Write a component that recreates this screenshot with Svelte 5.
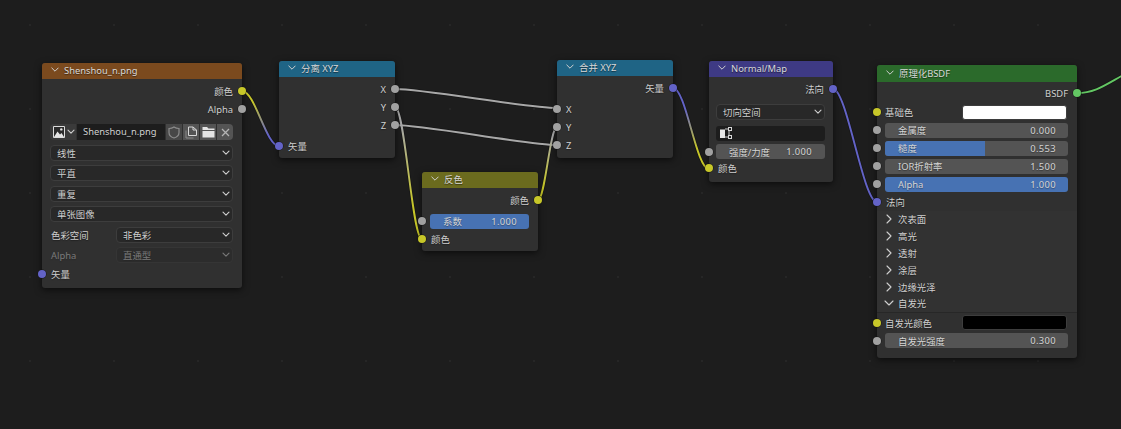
<script>
	const wires = [
		{ id: 'w1', color: 'url(#w1v)', d: 'M242 91 C255 91 266 146 279 146' },
		{ id: 'w2', color: '#a8a8a8', d: 'M395 89 C425 89 527 108 557 108' },
		{ id: 'w3', color: '#a8a8a8', d: 'M395 125 C425 125 527 145 557 145' },
		{ id: 'w4', color: 'url(#w4v)', d: 'M395 107 C405 107 412 239 422 239' },
		{ id: 'w5', color: 'url(#w5v)', d: 'M538 200 C545 200 550 127 557 127' },
		{ id: 'w6', color: 'url(#w6v)', d: 'M673 88 C686 88 696 169 709 169' },
		{ id: 'w7', color: '#6363c7', d: 'M833 89 C847 89 863 202 877 202' },
		{ id: 'w8', color: '#63c763', d: 'M1077 93 C1095 93 1105 85 1125 74' }
	];

	const panels = ['次表面', '高光', '透射', '涂层', '边缘光泽'];
</script>

{#snippet chevron()}
	<svg class="chev" width="8" height="6" viewBox="0 0 8 6"><path d="M1 1.2 L4 4.2 L7 1.2" fill="none" stroke="currentColor" stroke-width="1.1" stroke-linecap="round" stroke-linejoin="round" /></svg>
{/snippet}

{#snippet header(title)}
	<div class="head">
		<svg class="hchev" width="8" height="6" viewBox="0 0 8 6"><path d="M.8 1 L4 4.2 L7.200 1" fill="none" stroke="currentColor" stroke-width="1" stroke-linecap="round" stroke-linejoin="round" /></svg>
		<span>{title}</span>
	</div>
{/snippet}

{#snippet select(label, cls = '')}
	<div class="select {cls}"><span>{label}</span>{@render chevron()}</div>
{/snippet}

<div class="canvas">
	<svg class="wires" width="1121" height="429">
		<defs>
			<linearGradient id="w1v" gradientUnits="userSpaceOnUse" x1="0" y1="91" x2="0" y2="146"><stop offset="0.2" stop-color="#c7c729" /><stop offset="0.8" stop-color="#6363c7" /></linearGradient>
			<linearGradient id="w4v" gradientUnits="userSpaceOnUse" x1="0" y1="107" x2="0" y2="239"><stop offset="0.15" stop-color="#a8a8a8" /><stop offset="0.75" stop-color="#c7c729" /></linearGradient>
			<linearGradient id="w5v" gradientUnits="userSpaceOnUse" x1="0" y1="200" x2="0" y2="127"><stop offset="0.2" stop-color="#c7c729" /><stop offset="0.85" stop-color="#a8a8a8" /></linearGradient>
			<linearGradient id="w6v" gradientUnits="userSpaceOnUse" x1="0" y1="88" x2="0" y2="169"><stop offset="0.25" stop-color="#6363c7" /><stop offset="0.75" stop-color="#c7c729" /></linearGradient>
		</defs>
		{#each wires as w}
			<path d={w.d} fill="none" stroke="#161616" stroke-width="3.4" />
		{/each}
		{#each wires as w}
			<path d={w.d} fill="none" stroke={w.color} stroke-width="1.9" />
		{/each}
	</svg>

	<!-- image texture -->
	<section class="node image">
		{@render header('Shenshou_n.png')}
		<div class="row out"><span>颜色</span><i class="sock right col"></i></div>
		<div class="row out"><span>Alpha</span><i class="sock right val"></i></div>
		<div class="imgbar">
			<div class="imgpick">
				<svg width="12" height="12" viewBox="0 0 12 12"><path d="M.5.5h11v11H.5z" fill="#2b2b2b" stroke="#dcdcdc" /><path d="M1 11 L4.500 5.500 L7 8.500 L8.500 7 L11 11z" fill="#e6e6e6" /><circle cx="8.300" cy="3.400" r="1.200" fill="#e6e6e6" /></svg>
				{@render chevron()}
			</div>
			<div class="imgname">Shenshou_n.png</div>
			<div class="imgbtn dim">
				<svg width="12" height="13" viewBox="0 0 12 13"><path d="M6 1 C8 2.400 9.500 2.500 11 2.500 V6.500 C11 9.500 8.500 11.300 6 12 C3.500 11.300 1 9.500 1 6.500 V2.500 C2.500 2.500 4 2.400 6 1z" fill="none" stroke="#8c8c8c" stroke-width="1.200" /></svg>
			</div>
			<div class="imgbtn">
				<svg width="13" height="13" viewBox="0 0 13 13"><path d="M1 4.500 V12 H8.500" fill="none" stroke="#8a8a8a" stroke-width="1" /><path d="M3.500 1 H8 L11.500 4 V9.500 H3.500z M8 1 V4 H11.500" fill="none" stroke="#d8d8d8" stroke-width="1" /></svg>
			</div>
			<div class="imgbtn">
				<svg width="13" height="12" viewBox="0 0 13 12"><path d="M.5 1 H5 L6.500 2.500 H12.500 V4 H.5z" fill="#e4e4e4" /><path d="M.5 5 H12.500 V11.500 H.5z" fill="#e4e4e4" /></svg>
			</div>
			<div class="imgbtn">
				<svg width="9" height="9" viewBox="0 0 9 9"><path d="M1 1 L8 8 M8 1 L1 8" stroke="#b4b4b4" stroke-width="1.300" /></svg>
			</div>
		</div>
		<div class="stack">
			{@render select('线性')}
			{@render select('平直')}
			{@render select('重复')}
			{@render select('单张图像')}
			<div class="split"><span>色彩空间</span>{@render select('非色彩')}</div>
			<div class="split off"><span>Alpha</span>{@render select('直通型')}</div>
		</div>
		<div class="row in last"><i class="sock left vec"></i><span>矢量</span></div>
	</section>

	<!-- separate xyz -->
	<section class="node sep">
		{@render header('分离 XYZ')}
		<div class="row out"><span>X</span><i class="sock right val"></i></div>
		<div class="row out"><span>Y</span><i class="sock right val"></i></div>
		<div class="row out"><span>Z</span><i class="sock right val"></i></div>
		<div class="row in gap3"><i class="sock left vec"></i><span>矢量</span></div>
	</section>

	<!-- invert -->
	<section class="node inv">
		{@render header('反色')}
		<div class="row out"><span>颜色</span><i class="sock right col"></i></div>
		<div class="fieldrow gap3">
			<i class="sock left val"></i>
			<div class="slider full"><span>系数</span><b>1.000</b></div>
		</div>
		<div class="row in"><i class="sock left col"></i><span>颜色</span></div>
	</section>

	<!-- combine xyz -->
	<section class="node comb">
		{@render header('合并 XYZ')}
		<div class="row out"><span>矢量</span><i class="sock right vec"></i></div>
		<div class="row in gap3"><i class="sock left val"></i><span>X</span></div>
		<div class="row in"><i class="sock left val"></i><span>Y</span></div>
		<div class="row in"><i class="sock left val"></i><span>Z</span></div>
	</section>

	<!-- normal map -->
	<section class="node nor">
		{@render header('Normal/Map')}
		<div class="row out"><span>法向</span><i class="sock right vec"></i></div>
		<div class="norbody">
			{@render select('切向空间')}
			<div class="uvfield">
				<svg width="14" height="12" viewBox="0 0 14 12"><path d="M1 2.500 H6 V11 H1z" fill="#e8e8e8" /><path d="M6 2 H10 V10 H6" fill="none" stroke="#cfcfcf" stroke-width="1" /><rect x="9.500" y=".5" width="3" height="3" fill="#1d1d1d" stroke="#d8d8d8" /><rect x="9.500" y="8.500" width="3" height="3" fill="#1d1d1d" stroke="#d8d8d8" /></svg>
			</div>
			<div class="fieldrow inset">
				<i class="sock left val"></i>
				<div class="slider"><span>强度/力度</span><b>1.000</b></div>
			</div>
		</div>
		<div class="row in"><i class="sock left col"></i><span>颜色</span></div>
	</section>

	<!-- principled bsdf -->
	<section class="node pbr">
		{@render header('原理化BSDF')}
		<div class="row out"><span>BSDF</span><i class="sock right sha"></i></div>
		<div class="row in colorrow base"><i class="sock left col"></i><span>基础色</span><div class="swatch white"></div></div>
		<div class="fieldrow"><i class="sock left val"></i><div class="slider full gray"><span>金属度</span><b>0.000</b></div></div>
		<div class="fieldrow"><i class="sock left val"></i><div class="slider full gray"><em style="width: 54.500%"></em><span>糙度</span><b>0.553</b></div></div>
		<div class="fieldrow"><i class="sock left val"></i><div class="slider full gray"><span>IOR折射率</span><b>1.500</b></div></div>
		<div class="fieldrow"><i class="sock left val"></i><div class="slider full"><span>Alpha</span><b>1.000</b></div></div>
		<div class="row in"><i class="sock left vec"></i><span>法向</span></div>
		<div class="panels">
			{#each panels as p}
				<div class="panel">
					<svg width="6" height="10" viewBox="0 0 6 10"><path d="M1 1 L5 5 L1 9" fill="none" stroke="currentColor" stroke-width="1.100" stroke-linecap="round" stroke-linejoin="round" /></svg>
					<span>{p}</span>
				</div>
			{/each}
			<div class="panel open">
				<svg width="10" height="6" viewBox="0 0 10 6"><path d="M1 1 L5 5 L9 1" fill="none" stroke="currentColor" stroke-width="1.100" stroke-linecap="round" stroke-linejoin="round" /></svg>
				<span>自发光</span>
			</div>
		</div>
		<div class="row in colorrow emit"><i class="sock left col"></i><span>自发光颜色</span><div class="swatch black"></div></div>
		<div class="fieldrow"><i class="sock left val"></i><div class="slider full gray"><span>自发光强度</span><b>0.300</b></div></div>
	</section>
</div>

<style>
	:global(body) {
		margin: 0;
		background: #1d1d1d;
	}
	.canvas {
		position: relative;
		width: 1121px;
		height: 429px;
		overflow: hidden;
		background-color: #1d1d1d;
		background-image: radial-gradient(circle at center, #262626 0.8px, transparent 1.2px);
		background-size: 84px 84px;
		background-position: -12px -17px;
		font-family: 'Noto Sans', 'Noto Sans CJK SC', sans-serif;
		font-size: 9.400px;
		color: #cfcfcf;
		text-shadow: 0 1px 1px rgba(0, 0, 0, 0.35);
	}
	.wires {
		position: absolute;
		left: 0;
		top: 0;
	}
	.node {
		position: absolute;
		box-sizing: border-box;
		background: #303030;
		border-radius: 3px;
		box-shadow: 0 2px 7px rgba(0, 0, 0, 0.6);
	}
	.image { left: 42px; top: 63px; width: 200px; height: 225px; --h: #7b4a1e; }
	.sep { left: 279px; top: 61px; width: 116px; height: 97px; --h: #1f6485; }
	.inv { left: 422px; top: 172px; width: 116px; height: 79px; --h: #6b6b1e; }
	.comb { left: 557px; top: 60px; width: 116px; height: 98px; --h: #1f6485; }
	.nor { left: 709px; top: 61px; width: 124px; height: 121px; --h: #3e3a84; }
	.pbr { left: 877px; top: 65px; width: 200px; height: 293px; --h: #2b6a2b; }

	.head {
		display: flex;
		align-items: center;
		gap: 5px;
		box-sizing: border-box;
		height: 16px;
		padding: 0 0 2px 9px;
		background: var(--h);
		border-radius: 3px 3px 0 0;
		color: #d8d8d8;
		text-shadow: 0 1px 1px rgba(0, 0, 0, 0.5);
	}
	.pbr .head {
		height: 17px;
	}
	.hchev {
		flex: none;
		color: #cfcfcf;
	}
	.row {
		position: relative;
		display: flex;
		align-items: center;
		height: 18px;
		padding: 0 9px;
	}
	.out {
		justify-content: flex-end;
	}
	.head + .row {
		margin-top: 3px;
	}
	.pbr .head + .row {
		margin-top: 2px;
	}
	.gap3 {
		margin-top: 3px;
	}
	.last {
		margin-top: 2px;
	}
	.sock {
		position: absolute;
		top: 50%;
		width: 8px;
		height: 8px;
		margin-top: -4px;
		border-radius: 50%;
		box-shadow: 0 0 0 0.5px #141414;
	}
	.left { left: -4px; }
	.right { right: -4px; }
	.col { background: #c7c729; }
	.val { background: #a1a1a1; }
	.vec { background: #6363c7; }
	.sha { background: #63c763; }

	.imgbar {
		display: flex;
		gap: 1px;
		height: 16px;
		margin: 6px 9px 0 8px;
	}
	.imgpick {
		display: flex;
		align-items: center;
		gap: 2px;
		width: 26px;
		padding-left: 3px;
		box-sizing: border-box;
		background: #3a3a3a;
		border-radius: 4px 0 0 4px;
		color: #cfcfcf;
	}
	.imgname {
		flex: 1;
		padding-left: 6px;
		line-height: 15px;
		background: #1d1d1d;
	}
	.imgbtn {
		display: flex;
		align-items: center;
		justify-content: center;
		width: 16px;
		background: #545454;
	}
	.imgbtn.dim {
		background: #474747;
	}
	.imgbtn:last-child {
		border-radius: 0 4px 4px 0;
	}
	.stack {
		display: flex;
		flex-direction: column;
		gap: 4.600px;
		margin: 4.500px 9px 0 8px;
	}
	.select {
		display: flex;
		align-items: center;
		justify-content: space-between;
		box-sizing: border-box;
		height: 16px;
		padding: 0 2px 0 6px;
		background: #282828;
		border: 1px solid #3d3d3d;
		border-radius: 4px;
	}
	.chev {
		flex: none;
		color: #cfcfcf;
	}
	.split {
		display: flex;
		align-items: center;
		justify-content: space-between;
		padding-left: 1px;
	}
	.split :global(.select) {
		width: 117px;
	}
	.off {
		opacity: 0.45;
	}
	.fieldrow {
		position: relative;
		display: flex;
		align-items: center;
		height: 18px;
		padding: 0 9px 0 8px;
	}
	.slider {
		position: relative;
		flex: 1;
		display: flex;
		align-items: center;
		justify-content: space-between;
		height: 15px;
		padding: 0 12px 0 13px;
		background: #4772b3;
		border-radius: 3px;
		overflow: hidden;
		color: #d4d4d4;
	}
	.gray,
	.inset .slider {
		background: #545454;
	}
	.slider em {
		position: absolute;
		left: 0;
		top: 0;
		bottom: 0;
		background: #4772b3;
	}
	.slider span,
	.slider b {
		position: relative;
		font-weight: 400;
	}
	.slider b {
		letter-spacing: 0.35px;
	}
	.norbody {
		padding: 6px 8px 0 7px;
	}
	.uvfield {
		display: flex;
		align-items: center;
		height: 15px;
		margin-top: 5.500px;
		padding-left: 3px;
		background: #1d1d1d;
		border-radius: 3px;
	}
	.inset {
		height: 15px;
		margin-top: 3.500px;
		padding: 0;
	}
	.inset .slider {
		padding: 0 13px;
	}
	.inset .sock {
		left: -11px;
	}
	.colorrow {
		justify-content: space-between;
		padding-right: 10px;
		padding-left: 8px;
	}
	.base {
		margin-top: 1px;
	}
	.emit {
		margin-top: 1px;
	}
	.swatch {
		width: 105px;
		height: 15px;
		box-sizing: border-box;
		border-radius: 3px;
		border: 1px solid #3d3d3d;
	}
	.white {
		background: #fff;
	}
	.black {
		background: #000;
	}
	.panels {
		background: #323232;
		border-bottom: 1px solid #272727;
	}
	.panel {
		position: relative;
		display: flex;
		align-items: center;
		height: 16.800px;
		padding-left: 21px;
	}
	.panel svg {
		position: absolute;
		left: 9px;
	}
	.panel.open svg {
		left: 7px;
	}
</style>
